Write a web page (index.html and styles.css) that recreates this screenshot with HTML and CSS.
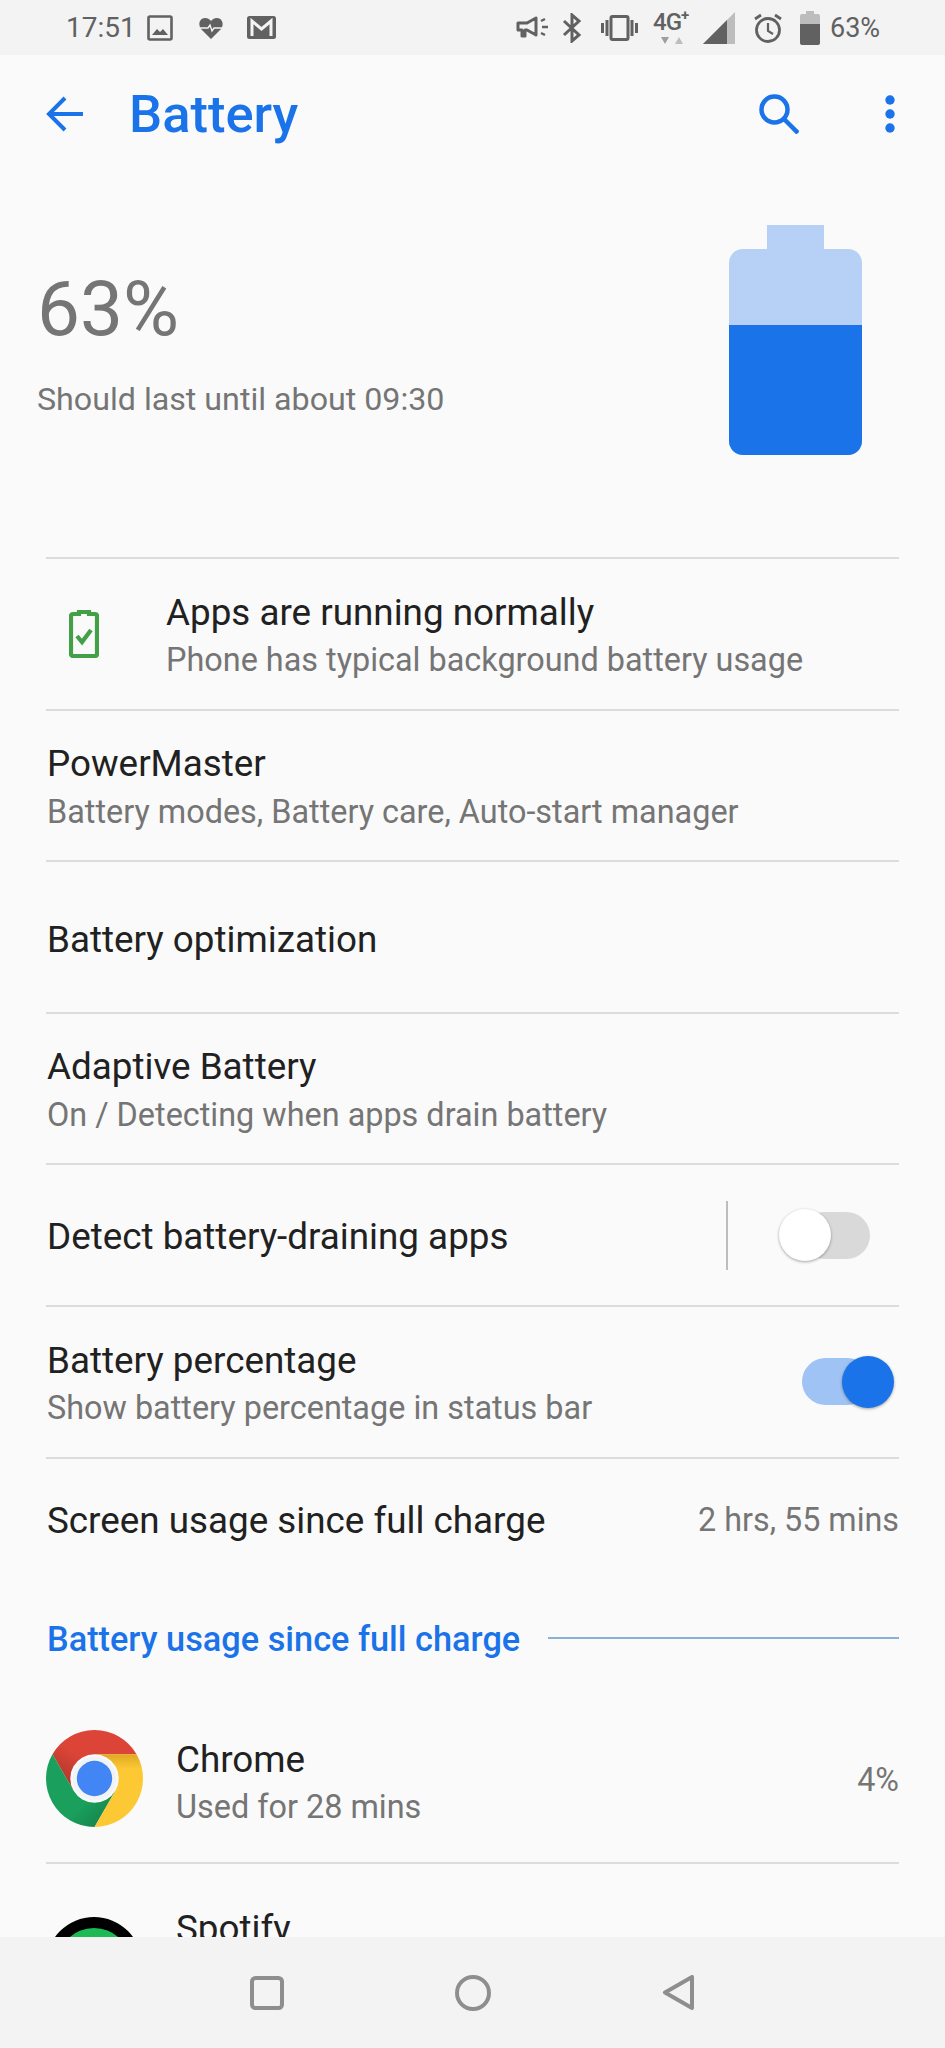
FILE: index.html
```html
<!DOCTYPE html>
<html lang="en">
<head>
    <meta charset="UTF-8">
    <meta name="viewport" content="width=device-width, initial-scale=1.0">
    <title>Battery</title>
    <link rel="stylesheet" href="styles.css">
</head>
<body>
    <div class="phone">
        <div class="status-bar">
            <span class="clock">17:51</span>
            <svg class="st st-image" viewBox="0 0 26 26"><rect x="1.500" y="1.500" width="23" height="23" rx="1.500" fill="none" stroke="#616161" stroke-width="2.600"/><path d="M5 20l5-6 3 3 3-3 5 6z" fill="#616161"/></svg>
            <svg class="st st-heart" viewBox="0 0 24 22"><path d="M12 22L2 12C-1.500 7 1 1 6 1c3 0 5 1.500 6 3 1-1.500 3-3 6-3 5 0 7.500 6 4 11z" fill="#616161"/><path d="M1 11h8l2-3 2 6 2-3h8" fill="none" stroke="#f3f3f3" stroke-width="1.400"/></svg>
            <svg class="st st-mail" viewBox="0 0 29 23"><rect width="29" height="23" rx="2.500" fill="#616161"/><path d="M5 20V5l9.500 8L24 5v15" fill="none" stroke="#f3f3f3" stroke-width="3"/></svg>
            <span class="spacer"></span>
            <svg class="st st-horn" viewBox="0 0 34 24"><path d="M2 7h9l9-5v17l-9-5H9v6H6v-6H2z" fill="none" stroke="#616161" stroke-width="3" stroke-linejoin="round"/><path d="M25 5l4-2M26 11h6M25 17l4 2" stroke="#616161" stroke-width="2.500" fill="none"/></svg>
            <svg class="st st-bt" viewBox="0 0 20 30"><path d="M2 8l15 14-7 6V2l7 6L2 22" fill="none" stroke="#616161" stroke-width="3"/></svg>
            <svg class="st st-vib" viewBox="0 0 37 26"><rect x="10" y="1.500" width="17" height="23" rx="1.500" fill="none" stroke="#616161" stroke-width="3"/><path d="M1.500 8v10M6 5v16M31 5v16M35.500 8v10" stroke="#616161" stroke-width="3" fill="none"/></svg>
            <div class="net">
                <span class="net-label">4G<sup>+</sup></span>
                <svg class="net-arrows" viewBox="0 0 26 8"><path d="M0 0h8L4 7z" fill="#9e9e9e"/><path d="M14 7h8l-4-7z" fill="#bdbdbd"/></svg>
            </div>
            <svg class="st st-signal" viewBox="0 0 34 34"><path d="M1 33L33 1v32z" fill="#bdbdbd"/><path d="M1 33L25 9v24z" fill="#616161"/></svg>
            <svg class="st st-alarm" viewBox="0 0 30 30"><circle cx="15" cy="17" r="11.500" fill="none" stroke="#616161" stroke-width="2.800"/><path d="M15 10v8l5 3" fill="none" stroke="#616161" stroke-width="2.200"/><path d="M2 6l6-4M28 6l-6-4" stroke="#616161" stroke-width="2.800" fill="none"/></svg>
            <svg class="st st-batt" viewBox="0 0 20 34"><path d="M6 0h8v3h4a2 2 0 0 1 2 2v8H0V5a2 2 0 0 1 2-2h4z" fill="#bdbdbd"/><path d="M0 13h20v19a2 2 0 0 1-2 2H2a2 2 0 0 1-2-2z" fill="#616161"/></svg>
            <span class="pct">63%</span>
        </div>

        <div class="toolbar">
            <svg class="tb-back" viewBox="0 0 38 36"><path d="M37 18H4M19 2L3 18l16 16" fill="none" stroke="#1a73e8" stroke-width="4"/></svg>
            <span class="tb-title">Battery</span>
            <svg class="tb-search" viewBox="0 0 40 40"><circle cx="15.500" cy="15.500" r="13" fill="none" stroke="#1a73e8" stroke-width="4.500"/><path d="M25 25l14 14" stroke="#1a73e8" stroke-width="4.500" fill="none"/></svg>
            <svg class="tb-more" viewBox="0 0 10 38"><circle cx="5" cy="5" r="4.700" fill="#1a73e8"/><circle cx="5" cy="19" r="4.700" fill="#1a73e8"/><circle cx="5" cy="33" r="4.700" fill="#1a73e8"/></svg>
        </div>

        <div class="content">
            <div class="summary">
                <div class="summary-text">
                    <div class="big-pct">63%</div>
                    <div class="last-until">Should last until about 09:30</div>
                </div>
                <div class="big-batt">
                    <div class="big-batt-nub"></div>
                    <div class="big-batt-body">
                        <div class="big-batt-fill"></div>
                    </div>
                </div>
            </div>

            <div class="list">
                <div class="row">
                    <svg class="row-icon" viewBox="0 0 30 48"><path d="M10 4V2h10v2h6a2 2 0 0 1 2 2v38a2 2 0 0 1-2 2H4a2 2 0 0 1-2-2V6a2 2 0 0 1 2-2z" fill="none" stroke="#43a047" stroke-width="4.200"/><path d="M8 26l5 6 9-12" fill="none" stroke="#43a047" stroke-width="4.200"/></svg>
                    <div class="row-text">
                        <div class="row-title">Apps are running normally</div>
                        <div class="row-sub">Phone has typical background battery usage</div>
                    </div>
                </div>
                <div class="row">
                    <div class="row-text">
                        <div class="row-title">PowerMaster</div>
                        <div class="row-sub">Battery modes, Battery care, Auto-start manager</div>
                    </div>
                </div>
                <div class="row">
                    <div class="row-text">
                        <div class="row-title">Battery optimization</div>
                    </div>
                </div>
                <div class="row">
                    <div class="row-text">
                        <div class="row-title">Adaptive Battery</div>
                        <div class="row-sub">On / Detecting when apps drain battery</div>
                    </div>
                </div>
                <div class="row row-short">
                    <div class="row-text">
                        <div class="row-title">Detect battery-draining apps</div>
                    </div>
                    <div class="row-sep"></div>
                    <div class="switch">
                        <div class="switch-knob"></div>
                    </div>
                </div>
                <div class="row">
                    <div class="row-text">
                        <div class="row-title">Battery percentage</div>
                        <div class="row-sub">Show battery percentage in status bar</div>
                    </div>
                    <div class="switch on">
                        <div class="switch-knob"></div>
                    </div>
                </div>
                <div class="row row-plain">
                    <div class="row-text">
                        <div class="row-title">Screen usage since full charge</div>
                    </div>
                    <div class="row-value">2 hrs, 55 mins</div>
                </div>
            </div>

            <div class="section">
                <span class="section-title">Battery usage since full charge</span>
                <div class="section-line"></div>
            </div>

            <div class="list">
                <div class="row row-app">
                    <svg class="app-icon" viewBox="0 0 96 96">
                        <defs>
                            <linearGradient id="shade-red" x1="0.15" y1="0.9" x2="0.45" y2="0.55"><stop offset="0" stop-color="#000" stop-opacity="0.2"/><stop offset="1" stop-color="#000" stop-opacity="0"/></linearGradient>
                            <linearGradient id="shade-yellow" x1="0.3" y1="0" x2="0.3" y2="0.2"><stop offset="0" stop-color="#a05a00" stop-opacity="0.3"/><stop offset="1" stop-color="#a05a00" stop-opacity="0"/></linearGradient>
                            <linearGradient id="shade-green" x1="0.75" y1="1" x2="0.5" y2="0.72"><stop offset="0" stop-color="#000" stop-opacity="0.16"/><stop offset="1" stop-color="#000" stop-opacity="0"/></linearGradient>
                        </defs>
                        <path d="M6.430 24A48 48 0 0 1 89.570 24H48A24 24 0 0 0 27.200 60z" fill="#db4437"/>
                        <path d="M6.430 24A48 48 0 0 1 89.570 24H48A24 24 0 0 0 27.200 60z" fill="url(#shade-red)"/>
                        <path d="M6.430 24L27.200 60A24 24 0 0 0 68.800 60L48 96A48 48 0 0 1 6.430 24z" fill="#1a9f5c"/>
                        <path d="M6.430 24L27.200 60A24 24 0 0 0 68.800 60L48 96A48 48 0 0 1 6.430 24z" fill="url(#shade-green)"/>
                        <path d="M89.570 24A48 48 0 0 1 48 96L68.800 60A24 24 0 0 0 48 24z" fill="#fcc934"/>
                        <path d="M89.570 24A48 48 0 0 1 48 96L68.800 60A24 24 0 0 0 48 24z" fill="url(#shade-yellow)"/>
                        <circle cx="48" cy="48" r="21.700" fill="#f1f3f4"/>
                        <circle cx="48" cy="48" r="17.500" fill="#4285f4"/>
                    </svg>
                    <div class="row-text">
                        <div class="row-title">Chrome</div>
                        <div class="row-sub">Used for 28 mins</div>
                    </div>
                    <div class="row-value">4%</div>
                </div>
                <div class="row row-app">
                    <div class="spotify"><div class="spotify-in"></div></div>
                    <div class="row-text">
                        <div class="row-title">Spotify</div>
                    </div>
                </div>
            </div>
        </div>

        <div class="nav-bar">
            <div class="nav-btn"><svg class="nav-square" viewBox="0 0 34 34"><rect x="2" y="2" width="30" height="30" rx="3.500" fill="none" stroke="#8e8e8e" stroke-width="4"/></svg></div>
            <div class="nav-btn"><svg class="nav-circle" viewBox="0 0 36 36"><circle cx="18" cy="18" r="16" fill="none" stroke="#8e8e8e" stroke-width="4"/></svg></div>
            <div class="nav-btn"><svg class="nav-tri" viewBox="0 0 32 35"><path d="M3 17.500L30 2v31z" fill="none" stroke="#8e8e8e" stroke-width="4" stroke-linejoin="round"/></svg></div>
        </div>
    </div>
</body>
</html>
```
FILE: styles.css
```css
body {
    margin: 0;
    font-family: Roboto, sans-serif;
    background-color: #fafafa;
    color: #212121;
    overflow: hidden;
}
.phone {
    width: 945px;
    height: 2048px;
    display: flex;
    flex-direction: column;
}
.status-bar {
    height: 55px;
    flex: none;
    background: #f3f3f3;
    display: flex;
    align-items: center;
    padding: 0 65px 0 66px;
    color: #616161;
}
.clock {
    font-size: 28px;
    width: 81px;
}
.st { flex: none; display: block; }
.st-image { width: 26px; height: 26px; }
.st-heart { width: 24px; height: 22px; margin-left: 26px; }
.st-mail { width: 29px; height: 23px; margin-left: 24px; }
.spacer { flex: 1; }
.st-horn { width: 34px; height: 24px; }
.st-bt { width: 20px; height: 30px; margin-left: 12px; }
.st-vib { width: 37px; height: 26px; margin-left: 19px; }
.net {
    width: 37px;
    margin-left: 15px;
    display: flex;
    flex-direction: column;
    align-items: flex-start;
}
.net-label {
    font-size: 24px;
    line-height: 24px;
    font-weight: 500;
    letter-spacing: -1px;
    white-space: nowrap;
}
.net-label sup {
    font-size: 15px;
    line-height: 0;
    vertical-align: 10px;
    font-weight: 700;
}
.net-arrows { width: 26px; height: 8px; margin: 3px 0 0 8px; }
.st-signal { width: 34px; height: 34px; margin-left: 12px; margin-top: 1px; }
.st-alarm { width: 30px; height: 30px; margin-left: 17px; }
.st-batt { width: 20px; height: 34px; margin-left: 17px; margin-top: 1px; }
.pct { font-size: 27px; margin-left: 10px; width: 50px; white-space: nowrap; }

.toolbar {
    height: 118px;
    flex: none;
    display: flex;
    align-items: center;
    padding: 0 50px 0 46px;
}
.tb-back { width: 38px; height: 36px; }
.tb-title {
    flex: 1;
    margin-left: 45px;
    font-size: 52.5px;
    font-weight: 500;
    color: #1a73e8;
}
.tb-search { width: 40px; height: 40px; margin-right: 86px; }
.tb-more { width: 10px; height: 38px; }

.content {
    flex: 1;
    overflow: hidden;
    min-height: 0;
}
.summary {
    height: 384px;
    box-sizing: border-box;
    padding: 52px 83px 0 37px;
    display: flex;
    justify-content: space-between;
}
.big-pct {
    font-size: 76.5px;
    font-weight: 400;
    color: #757575;
    line-height: 90px;
    margin-top: 39px;
}
.last-until {
    font-size: 32.2px;
    color: #757575;
    margin-top: 25px;
    line-height: 40px;
}
.big-batt {
    width: 133px;
    display: flex;
    flex-direction: column;
    align-items: center;
}
.big-batt-nub {
    width: 57px;
    height: 24px;
    background: #b7d0f5;
}
.big-batt-body {
    width: 133px;
    height: 206px;
    border-radius: 14px;
    background: #b7d0f5;
    overflow: hidden;
    display: flex;
    flex-direction: column;
    justify-content: flex-end;
}
.big-batt-fill {
    height: 130px;
    background: #1a73e8;
}

.list {
    margin: 0 46px;
}
.row {
    height: 151.5px;
    box-sizing: border-box;
    border-top: 2px solid #dcdcdc;
    display: flex;
    align-items: center;
}
.row-short { height: 142px; }
.row-plain { height: 125px; }
.row-icon {
    width: 30px;
    height: 48px;
    margin: 0 66px 0 23px;
    flex: none;
}
.row-text {
    flex: 1;
    min-width: 0;
    padding: 5.5px 0 0 1px;
}
.row-short .row-text { padding-top: 2px; }
.row-plain .row-text { padding-top: 0; }
.row-title {
    font-size: 36.8px;
    line-height: 47px;
    color: #212121;
}
.row-sub {
    font-size: 32.4px;
    line-height: 47px;
    margin-top: 1.5px;
    color: #757575;
}
.row-value {
    font-size: 32.3px;
    color: #757575;
}
.row-sep {
    width: 2px;
    height: 69px;
    background: #bdbdbd;
    margin-right: 73px;
}
.switch {
    width: 69px;
    height: 47px;
    border-radius: 24px;
    background: #d9d9d9;
    position: relative;
    margin-right: 29px;
}
.switch-knob {
    position: absolute;
    top: -2.500px;
    left: -22px;
    width: 52px;
    height: 52px;
    border-radius: 50%;
    background: #fff;
    box-shadow: 0 1px 3px rgba(0, 0, 0, 0.35);
}
.switch.on {
    background: #9fc3f4;
    margin-right: 28px;
}
.switch.on .switch-knob {
    left: 40px;
    background: #1a73e8;
}

.section {
    height: 114px;
    margin: 0 46px 0 47px;
    display: flex;
    align-items: center;
    gap: 28px;
}
.section-title {
    font-size: 34.3px;
    font-weight: 500;
    color: #1a73e8;
}
.section-line {
    flex: 1;
    height: 2px;
    margin-top: -2px;
    background: #8ab2d6;
}
.row-app {
    border-top: none;
    border-bottom: 2px solid #dcdcdc;
    height: 168px;
}
.row-app .row-value { padding-top: 3px; }
.row-app .row-text { padding-top: 9.5px; }
.row-app + .row-app {
    border-bottom: none;
    align-items: flex-start;
}
.app-icon {
    width: 97px;
    height: 97px;
    flex: none;
    margin-right: 32px;
}
.spotify {
    width: 96px;
    height: 96px;
    margin: 53px 33px 0 0;
    border-radius: 50%;
    background: #000;
    padding: 11px;
    box-sizing: border-box;
    flex: none;
}
.spotify-in {
    width: 74px;
    height: 74px;
    border-radius: 50%;
    background: #1db954;
}
.row-app + .row-app .row-text {
    padding-top: 41px;
}

.nav-bar {
    height: 111px;
    flex: none;
    background: #f3f3f3;
    display: flex;
    justify-content: center;
    align-items: center;
}
.nav-btn {
    width: 205.500px;
    display: flex;
    justify-content: center;
}
.nav-square { width: 34px; height: 34px; }
.nav-circle { width: 36px; height: 36px; }
.nav-tri { width: 32px; height: 35px; }
```
